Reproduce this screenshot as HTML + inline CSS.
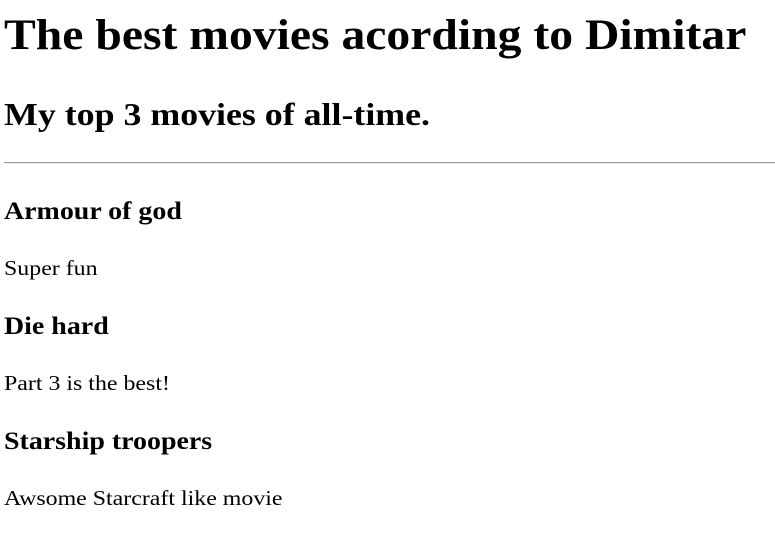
<!DOCTYPE html>
<html><head><meta charset="utf-8"><style>
body{margin:0;width:775px;height:552px;background:#fff;font-family:"Liberation Serif",serif;color:#000;position:relative;overflow:hidden}
div{position:absolute;left:4px;line-height:1;white-space:nowrap;transform-origin:0 0}
.h1{font-size:43px;font-weight:bold;transform:scaleX(1.108)}
.h2{font-size:32px;font-weight:bold;transform:scaleX(1.12)}
.h3{font-size:25px;font-weight:bold;transform:scaleX(1.117)}
.p{font-size:21px;transform:scaleX(1.138)}
.hr{top:162px;left:4px;width:771px;height:0;border-top:1px solid #9a9a9a;border-bottom:1px solid #eee}
</style></head><body>
<div class="h1" style="top:14px">The best movies acording to Dimitar</div>
<div class="h2" style="top:98px">My top 3 movies of all-time.</div>
<div class="hr"></div>
<div class="h3" style="top:199px">Armour of god</div>
<div class="p" style="top:258px">Super fun</div>
<div class="h3" style="top:314px">Die hard</div>
<div class="p" style="top:373px">Part 3 is the best!</div>
<div class="h3" style="top:429px">Starship troopers</div>
<div class="p" style="top:488px">Awsome Starcraft like movie</div>
</body></html>
